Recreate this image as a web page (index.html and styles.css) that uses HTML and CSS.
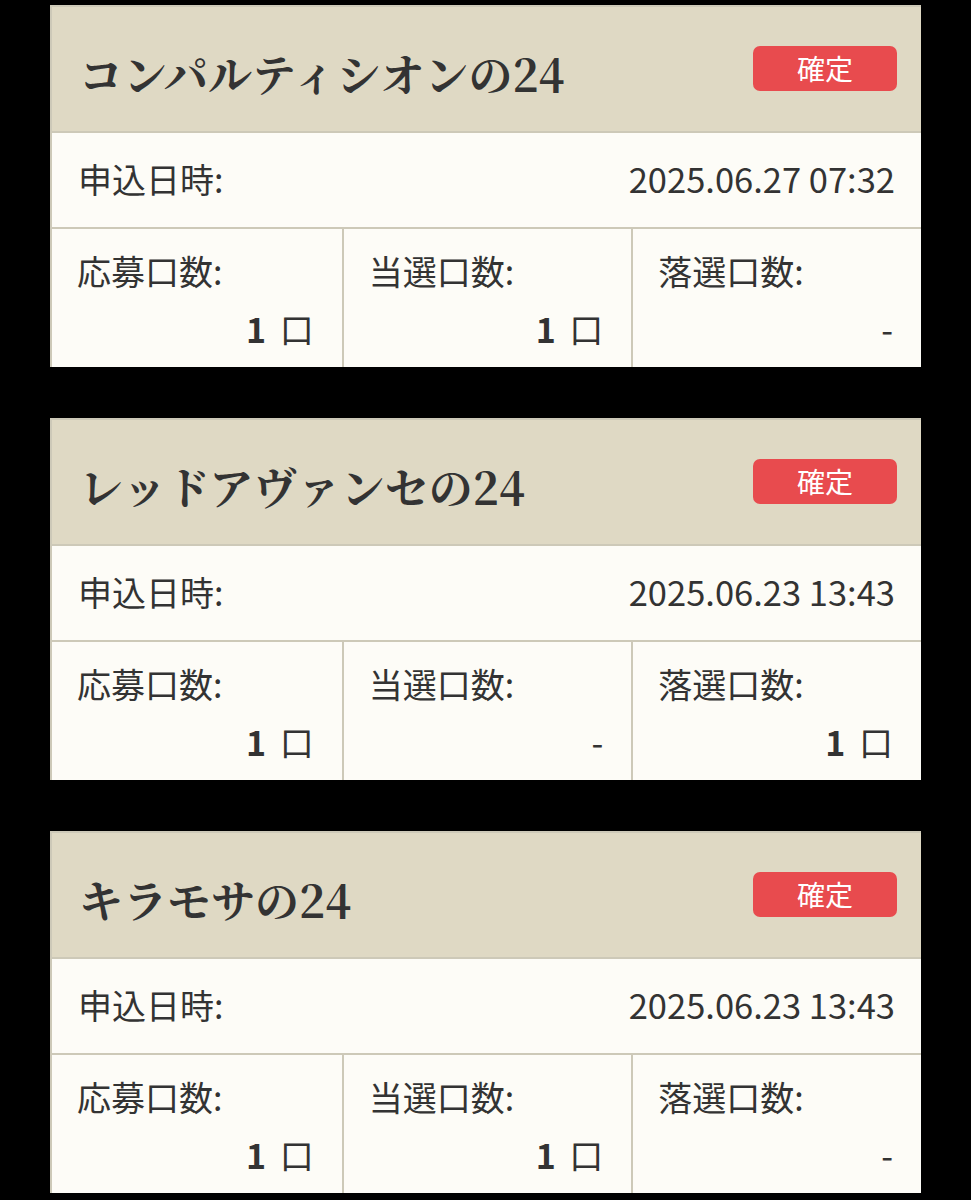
FILE: index.html
```html
<!DOCTYPE html>
<html lang="ja">
<head>
<meta charset="utf-8">
<link rel="stylesheet" href="styles.css">
</head>
<body>
<main class="list">
  <section class="card">
    <header class="card-head">
      <h2 class="title">コンパルティシオンの24</h2>
      <span class="badge">確定</span>
    </header>
    <div class="date-row">
      <span class="label">申込日時:</span>
      <span class="date">2025.06.27 07:32</span>
    </div>
    <div class="stats">
      <div class="cell"><span class="label">応募口数:</span><span class="value"><b>1</b> 口</span></div>
      <div class="cell"><span class="label">当選口数:</span><span class="value"><b>1</b> 口</span></div>
      <div class="cell"><span class="label">落選口数:</span><span class="value">-</span></div>
    </div>
  </section>
  <section class="card">
    <header class="card-head">
      <h2 class="title">レッドアヴァンセの24</h2>
      <span class="badge">確定</span>
    </header>
    <div class="date-row">
      <span class="label">申込日時:</span>
      <span class="date">2025.06.23 13:43</span>
    </div>
    <div class="stats">
      <div class="cell"><span class="label">応募口数:</span><span class="value"><b>1</b> 口</span></div>
      <div class="cell"><span class="label">当選口数:</span><span class="value">-</span></div>
      <div class="cell"><span class="label">落選口数:</span><span class="value"><b>1</b> 口</span></div>
    </div>
  </section>
  <section class="card">
    <header class="card-head">
      <h2 class="title">キラモサの24</h2>
      <span class="badge">確定</span>
    </header>
    <div class="date-row">
      <span class="label">申込日時:</span>
      <span class="date">2025.06.23 13:43</span>
    </div>
    <div class="stats">
      <div class="cell"><span class="label">応募口数:</span><span class="value"><b>1</b> 口</span></div>
      <div class="cell"><span class="label">当選口数:</span><span class="value"><b>1</b> 口</span></div>
      <div class="cell"><span class="label">落選口数:</span><span class="value">-</span></div>
    </div>
  </section>
</main>
</body>
</html>
```
FILE: styles.css
```css
html, body {
  margin: 0;
  padding: 0;
  background: #000;
}
body {
  font-family: "Noto Sans CJK JP", "Noto Sans", sans-serif;
  color: #333;
}
.list {
  display: flex;
  flex-direction: column;
  gap: 51px;
  padding: 5px 50px 0 50px;
}
.card {
  background: #fdfcf7;
  border-left: 2px solid #cdc9b8;
  box-sizing: border-box;
  width: 871px;
}
.card-head {
  display: flex;
  align-items: center;
  justify-content: space-between;
  height: 128px;
  box-sizing: border-box;
  padding: 0 24px 0 27px;
  background: #dfd9c4;
  border-top: 2px solid #cdc9b8;
  border-bottom: 2px solid #cdc9b8;
}
.title {
  margin: 0;
  font-family: "Noto Serif CJK JP", "Noto Sans CJK JP", serif;
  font-weight: 700;
  font-size: 44px;
  line-height: 1.2;
  color: #333;
  margin-top: 8px;
}
.badge {
  display: flex;
  align-items: center;
  justify-content: center;
  width: 144px;
  height: 45px;
  margin-top: -2px;
  border-radius: 7px;
  background: #e84b4e;
  color: #fff;
  font-size: 28px;
}
.date-row {
  display: flex;
  align-items: center;
  justify-content: space-between;
  height: 96px;
  box-sizing: border-box;
  padding: 0 26px 4px 26px;
  border-bottom: 2px solid #cdc9b8;
  font-size: 34px;
}
.date {
  font-size: 34.5px;
}
.stats {
  display: grid;
  grid-template-columns: 1fr 1fr 1fr;
}
.cell {
  display: flex;
  flex-direction: column;
  padding: 20px 28px 16px 25px;
  font-size: 34px;
  line-height: 44px;
}
.cell + .cell {
  border-left: 2px solid #cdc9b8;
}
.value {
  margin-top: 14px;
  text-align: right;
  word-spacing: 6px;
}
.value b {
  font-weight: 700;
}
```
